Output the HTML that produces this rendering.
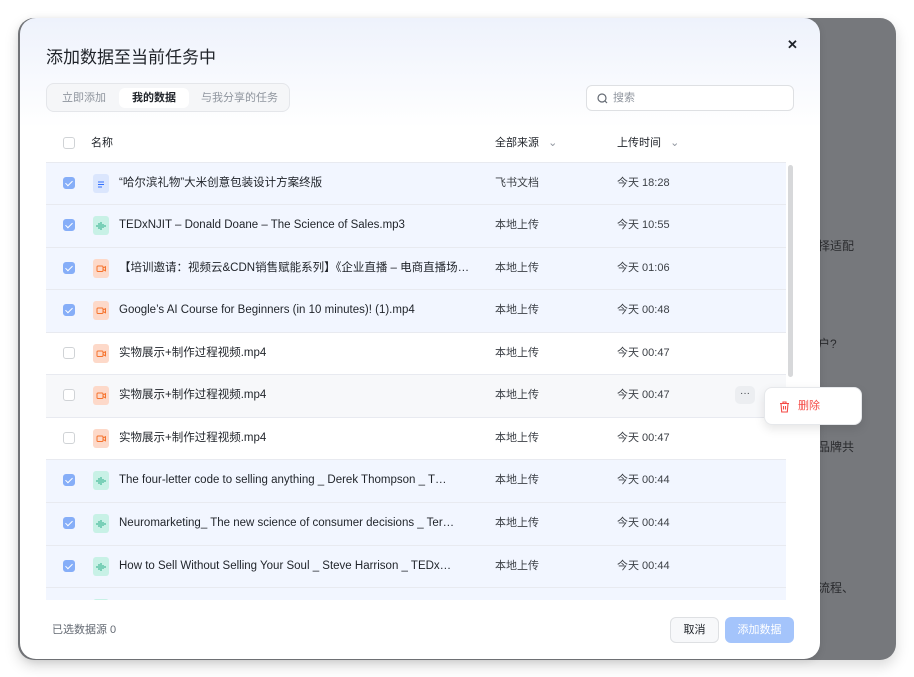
<!DOCTYPE html>
<html><head><meta charset="utf-8"><style>
*{box-sizing:border-box;margin:0;padding:0}
body{width:914px;height:677px;background:#fff;position:relative;overflow:hidden;font-family:"Liberation Sans","Noto Sans CJK SC",sans-serif;color:#1f2329}
.bg{position:absolute;left:18px;top:18px;width:878px;height:642px;background:#76787c;border-radius:16px;box-shadow:0 6px 14px rgba(0,0,0,.15)}
.bgt{position:absolute;color:#2a2b2e;font-size:12px}
.dlg{position:absolute;left:20px;top:18px;width:800px;height:641px;border-radius:16px;background:linear-gradient(180deg,#eef2fc 0,#fff 110px);overflow:hidden;box-shadow:0 2px 8px rgba(0,0,0,.1)}
.title{position:absolute;left:26px;top:28px;font-size:17px;line-height:24px;color:#1f2329}
.close{position:absolute;left:767px;top:19px;font-size:13px;font-weight:bold;color:#1f2329}
.tabs{position:absolute;left:26px;top:65px;width:244px;height:29px;border:1px solid #e4e6ea;border-radius:8px;background:#f5f6f8}
.tab{position:absolute;top:4px;height:20px;font-size:11px;color:#8f959e;line-height:20px}
.tab.on{background:#fff;border-radius:6px;color:#1f2329;font-weight:bold;padding:0 13px}
.search{position:absolute;left:566px;top:67px;width:208px;height:26px;border:1px solid #dee0e3;border-radius:6px;background:#fff;font-size:11px;color:#8f959e;line-height:24px;padding-left:26px}
.hd{position:absolute;top:118px;font-size:11px;line-height:14px;color:#1f2329}
.cb{position:absolute;left:17px;width:12px;height:12px;border:1px solid #d0d3d6;border-radius:3px;background:#fff}
.cb.on{background:#86aef8;border-color:#86aef8}
.cb.on:after{content:"";position:absolute;left:3px;top:1px;width:3px;height:6px;border:solid #fff;border-width:0 1.5px 1.5px 0;transform:rotate(45deg)}
.rows{position:absolute;left:26px;top:144px;width:740px;height:438px;overflow:hidden}
.row{position:absolute;left:0;width:740px;height:43px;border-top:1px solid #e8eaf0;font-size:11px}
.row.sel{background:#f2f6ff}
.row.hov{background:#f7f8fa}
.ic{position:absolute;left:47px;top:11px;width:16px;height:19px;border-radius:3px}
.ic.d{background:#dbe6fd}.ic.a{background:#c8f1e6}.ic.v{background:#fdd9c9}
.ic svg{position:absolute;left:0;top:0}
.nm,.src,.tm{position:absolute;top:0;line-height:41px;white-space:nowrap}
.nm{left:73px;color:#1f2329;font-size:11.5px}
.src{left:449px;color:#3b3f45}
.tm{left:571px;color:#3b3f45}
.sb{position:absolute;left:768px;top:147px;width:5px;height:212px;background:#d7d8da;border-radius:3px}
.foot{position:absolute;left:32px;top:605px;font-size:11px;line-height:14px;color:#646a73}
.btn{position:absolute;top:599px;height:26px;border-radius:6px;font-size:11px;line-height:24px;text-align:center}
.menu{position:absolute;left:764px;top:387px;width:98px;height:38px;background:#fff;border-radius:8px;border:1px solid #e6e8eb;box-shadow:0 4px 10px rgba(0,0,0,.1);font-size:11px;color:#f54a45;line-height:36px;padding-left:33px}
</style></head><body>
<div class="bg"></div>
<div class="bgt" style="left:818px;top:237px">择适配</div>
<div class="bgt" style="left:818px;top:335px">户?</div>
<div class="bgt" style="left:818px;top:438px">品牌共</div>
<div class="bgt" style="left:818px;top:579px">流程、</div>
<div class="dlg">
<div class="title">添加数据至当前任务中</div>
<div class="close">✕</div>
<div class="tabs">
<div class="tab" style="left:15px">立即添加</div>
<div class="tab on" style="left:72px">我的数据</div>
<div class="tab" style="left:154px">与我分享的任务</div>
</div>
<div class="search"><svg style="position:absolute;left:10px;top:7px" width="11" height="11" viewBox="0 0 11 11"><circle cx="5" cy="5" r="4" fill="none" stroke="#646a73" stroke-width="1.2"/><path d="M8 8l2 2" stroke="#646a73" stroke-width="1.2"/></svg>搜索</div>
<div class="cb" style="left:43px;top:119px"></div>
<div class="hd" style="left:71px">名称</div>
<div class="hd" style="left:475px">全部来源 <span style="margin-left:6px;color:#8f959e">⌄</span></div>
<div class="hd" style="left:597px">上传时间 <span style="margin-left:6px;color:#8f959e">⌄</span></div>
<div class="rows">
<div class="row sel" style="top:0"><div class="cb on" style="top:14px"></div><div class="ic d"><svg width="16" height="19"><path d="M5 8h6M5 10.5h6M5 13h4" stroke="#3370ff" stroke-width="1"/></svg></div><div class="nm">“哈尔滨礼物”大米创意包装设计方案终版</div><div class="src">飞书文档</div><div class="tm">今天 18:28</div></div>
<div class="row sel" style="top:42px"><div class="cb on" style="top:14px"></div><div class="ic a"><svg width="16" height="19"><path d="M4 9v2M6 7v6M8 6v8M10 8v4M12 9v2" stroke="#2bb08a" stroke-width="1"/></svg></div><div class="nm">TEDxNJIT – Donald Doane – The Science of Sales.mp3</div><div class="src">本地上传</div><div class="tm">今天 10:55</div></div>
<div class="row sel" style="top:85px"><div class="cb on" style="top:14px"></div><div class="ic v"><svg width="16" height="19"><rect x="4" y="7" width="6" height="5.5" rx="1" fill="none" stroke="#f5732d"/><path d="M10 9l2.5-1.3v4.1L10 10.5" fill="none" stroke="#f5732d"/></svg></div><div class="nm">【培训邀请：视频云&amp;CDN销售赋能系列】《企业直播 – 电商直播场…</div><div class="src">本地上传</div><div class="tm">今天 01:06</div></div>
<div class="row sel" style="top:127px"><div class="cb on" style="top:14px"></div><div class="ic v"><svg width="16" height="19"><rect x="4" y="7" width="6" height="5.5" rx="1" fill="none" stroke="#f5732d"/><path d="M10 9l2.5-1.3v4.1L10 10.5" fill="none" stroke="#f5732d"/></svg></div><div class="nm">Google’s AI Course for Beginners (in 10 minutes)! (1).mp4</div><div class="src">本地上传</div><div class="tm">今天 00:48</div></div>
<div class="row" style="top:170px"><div class="cb" style="top:14px"></div><div class="ic v"><svg width="16" height="19"><rect x="4" y="7" width="6" height="5.5" rx="1" fill="none" stroke="#f5732d"/><path d="M10 9l2.5-1.3v4.1L10 10.5" fill="none" stroke="#f5732d"/></svg></div><div class="nm">实物展示+制作过程视频.mp4</div><div class="src">本地上传</div><div class="tm">今天 00:47</div></div>
<div class="row hov" style="top:212px"><div class="cb" style="top:14px"></div><div class="ic v"><svg width="16" height="19"><rect x="4" y="7" width="6" height="5.5" rx="1" fill="none" stroke="#f5732d"/><path d="M10 9l2.5-1.3v4.1L10 10.5" fill="none" stroke="#f5732d"/></svg></div><div class="nm">实物展示+制作过程视频.mp4</div><div class="src">本地上传</div><div class="tm">今天 00:47</div><div style="position:absolute;left:689px;top:11px;width:20px;height:18px;background:#eceef1;border-radius:5px;font-size:10px;text-align:center;line-height:16px;color:#3b3f45">···</div></div>
<div class="row" style="top:255px"><div class="cb" style="top:14px"></div><div class="ic v"><svg width="16" height="19"><rect x="4" y="7" width="6" height="5.5" rx="1" fill="none" stroke="#f5732d"/><path d="M10 9l2.5-1.3v4.1L10 10.5" fill="none" stroke="#f5732d"/></svg></div><div class="nm">实物展示+制作过程视频.mp4</div><div class="src">本地上传</div><div class="tm">今天 00:47</div></div>
<div class="row sel" style="top:297px"><div class="cb on" style="top:14px"></div><div class="ic a"><svg width="16" height="19"><path d="M4 9v2M6 7v6M8 6v8M10 8v4M12 9v2" stroke="#2bb08a" stroke-width="1"/></svg></div><div class="nm">The four-letter code to selling anything _ Derek Thompson _ T…</div><div class="src">本地上传</div><div class="tm">今天 00:44</div></div>
<div class="row sel" style="top:340px"><div class="cb on" style="top:14px"></div><div class="ic a"><svg width="16" height="19"><path d="M4 9v2M6 7v6M8 6v8M10 8v4M12 9v2" stroke="#2bb08a" stroke-width="1"/></svg></div><div class="nm">Neuromarketing_ The new science of consumer decisions _ Ter…</div><div class="src">本地上传</div><div class="tm">今天 00:44</div></div>
<div class="row sel" style="top:383px"><div class="cb on" style="top:14px"></div><div class="ic a"><svg width="16" height="19"><path d="M4 9v2M6 7v6M8 6v8M10 8v4M12 9v2" stroke="#2bb08a" stroke-width="1"/></svg></div><div class="nm">How to Sell Without Selling Your Soul _ Steve Harrison _ TEDx…</div><div class="src">本地上传</div><div class="tm">今天 00:44</div></div>
<div class="row sel" style="top:425px"><div class="ic a"></div></div>
</div>
<div class="sb"></div>
<div class="foot">已选数据源 0</div>
<div class="btn" style="left:650px;width:49px;border:1px solid #dee0e3;background:#f7f8fa;color:#1f2329">取消</div>
<div class="btn" style="left:705px;width:69px;background:#a4c4fb;color:#fff;line-height:26px">添加数据</div>
</div>
<div class="menu"><svg style="position:absolute;left:14px;top:13px" width="11" height="12" viewBox="0 0 11 12"><path d="M1 2.5h9M4 2.5V1h3v1.5M2 2.5l.7 8.5h5.6L9 2.5M4.5 5v3.5M6.5 5v3.5" fill="none" stroke="#f54a45" stroke-width="1.1"/></svg>删除</div>
</body></html>
